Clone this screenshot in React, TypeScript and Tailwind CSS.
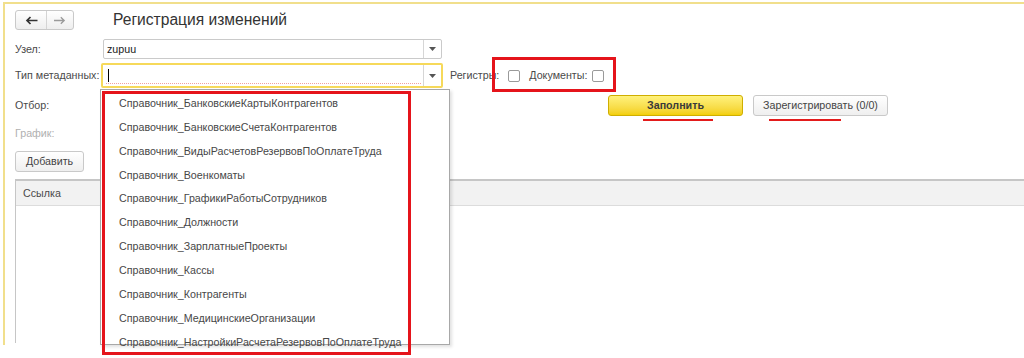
import { ReactNode } from "react";

const items = [
  "Справочник_БанковскиеКартыКонтрагентов",
  "Справочник_БанковскиеСчетаКонтрагентов",
  "Справочник_ВидыРасчетовРезервовПоОплатеТруда",
  "Справочник_Военкоматы",
  "Справочник_ГрафикиРаботыСотрудников",
  "Справочник_Должности",
  "Справочник_ЗарплатныеПроекты",
  "Справочник_Кассы",
  "Справочник_Контрагенты",
  "Справочник_МедицинскиеОрганизации",
  "Справочник_НастройкиРасчетаРезервовПоОплатеТруда",
];

function Arrow() {
  return (
    <div className="flex h-full w-[18px] items-center justify-center border-l border-[#d6d6d6]">
      <svg width="7" height="4" viewBox="0 0 7 4">
        <path d="M0 0H7L3.5 4Z" fill="#555" />
      </svg>
    </div>
  );
}

function Label({ children, w, muted }: { children: ReactNode; w: string; muted?: boolean }) {
  return (
    <div
      className={`${w} shrink-0 whitespace-nowrap text-[10.7px] ${muted ? "text-[#b0b0b0]" : "text-[#4a4a4a]"}`}
    >
      {children}
    </div>
  );
}

function Checkbox() {
  return <div className="h-[12px] w-[12px] rounded-[2px] border border-[#9a9a9a] bg-white" />;
}

export default function App() {
  return (
    <div className="relative h-[358px] w-[1024px] overflow-hidden bg-white font-['Liberation_Sans',Arial,sans-serif]">
      <div className="ml-[3px] mt-[2px] h-[343px] border-l-2 border-t-2 border-[#f1df8c] pl-[10px]">
        {/* шапка */}
        <div className="mt-[6px] flex h-[20px] items-center">
          <div className="flex h-[20px] w-[59px] rounded-[3px] border border-[#c9c9c9] bg-gradient-to-b from-white to-[#eeeeee]">
            <div className="flex w-[31px] items-center justify-center border-r border-[#d4d4d4]">
              <svg width="13" height="9" viewBox="0 0 13 9">
                <path d="M12.5 4.5H2 M5.5 1L2 4.5L5.5 8" fill="none" stroke="#333" strokeWidth="1.7" />
              </svg>
            </div>
            <div className="flex flex-1 items-center justify-center">
              <svg width="12" height="9" viewBox="0 0 12 9">
                <path d="M0 4.5H10 M6.8 1.2L10.2 4.5L6.8 7.8" fill="none" stroke="#9a9a9a" strokeWidth="1.3" />
              </svg>
            </div>
          </div>
          <div className="ml-[39px] text-[15.6px] text-[#333]">Регистрация изменений</div>
        </div>

        {/* Узел */}
        <div className="mt-[9px] flex h-[20px] items-center">
          <Label w="w-[88px]">Узел:</Label>
          <div className="flex h-[20px] w-[339px] items-center rounded-[2px] border border-[#cacaca]">
            <div className="flex-1 pl-[3px] text-[10.7px] text-[#222]">zupuu</div>
            <Arrow />
          </div>
        </div>

        {/* Тип метаданных */}
        <div className="mt-[4px] flex h-[25px] items-center">
          <Label w="w-[86px]">Тип метаданных:</Label>
          <div className="flex h-[25px] w-[342px] items-center rounded-[2px] border-2 border-[#f6d95a]">
            <div className="relative flex h-full flex-1 items-center pl-[5px]">
              <div className="h-[13px] w-px bg-black" />
              <div className="absolute bottom-[2px] left-[3px] right-[2px] border-b border-dotted border-[#f0a0a0]" />
            </div>
            <Arrow />
          </div>
          <div className="ml-[7px] text-[10.7px] text-[#4a4a4a]">Регистры:</div>
          <div className="ml-[9px]">
            <Checkbox />
          </div>
          <div className="ml-[9px] text-[10.7px] text-[#4a4a4a]">Документы:</div>
          <div className="ml-[5px]">
            <Checkbox />
          </div>
        </div>

        {/* Отбор */}
        <div className="mt-[7px] flex h-[21px] items-center">
          <Label w="w-[593px]">Отбор:</Label>
          <div className="relative">
            <div className="flex h-[21px] w-[135px] items-center justify-center rounded-[3px] border border-[#cfae00] bg-gradient-to-b from-[#fff27a] to-[#f3cf00] text-[10.7px] font-bold text-[#3a3a3a]">
              Заполнить
            </div>
            <div className="absolute left-[35px] top-[24px] h-[2px] w-[70px] bg-[#e31b1b]" />
          </div>
          <div className="relative ml-[10px]">
            <div className="flex h-[21px] w-[135px] items-center justify-center rounded-[3px] border border-[#c9c9c9] bg-gradient-to-b from-white to-[#efefef] text-[10.7px] text-[#444]">
              Зарегистрировать (0/0)
            </div>
            <div className="absolute left-[16px] top-[24px] h-[2px] w-[72px] bg-[#e31b1b]" />
          </div>
        </div>

        {/* График */}
        <div className="mt-[10px] flex h-[14px] items-center">
          <Label w="w-[88px]" muted>
            График:
          </Label>
        </div>

        {/* кнопки (вторая скрыта под списком) */}
        <div className="mt-[11px] flex h-[21px] items-center gap-[16px]">
          <div className="flex h-[21px] w-[69px] items-center justify-center rounded-[3px] border border-[#c9c9c9] bg-gradient-to-b from-white to-[#efefef] text-[10.7px] text-[#444]">
            Добавить
          </div>
          <div className="h-[21px] w-[69px] rounded-[3px] border border-[#c9c9c9] bg-gradient-to-b from-white to-[#efefef]" />
        </div>

        {/* таблица */}
        <div className="mt-[7px] h-[164px] border-l border-t-2 border-[#c6c6c6]">
          <div className="flex h-[25px] items-center border-b border-[#dcdcdc] bg-[#f2f2f2] pl-[7px] text-[10.7px] text-[#4a4a4a]">
            Ссылка
          </div>
        </div>
      </div>

      {/* выпадающий список */}
      <div className="absolute left-[100px] top-[89px] h-[256px] w-[350px] border border-[#a8a8a8] bg-white shadow-[2px_2px_3px_rgba(0,0,0,0.12)]">
        <div className="flex flex-col pl-[18px] pt-[1px]">
          {items.map((t) => (
            <div key={t} className="flex h-[23.9px] items-center text-[10.7px] text-[#474747]">
              {t}
            </div>
          ))}
        </div>
      </div>

      {/* пометки */}
      <div className="absolute left-[102px] top-[91px] h-[264px] w-[309px] border-[3px] border-[#e5141b]" />
      <div className="absolute left-[492px] top-[57px] h-[35px] w-[124px] border-[3px] border-[#e5141b]" />
    </div>
  );
}
